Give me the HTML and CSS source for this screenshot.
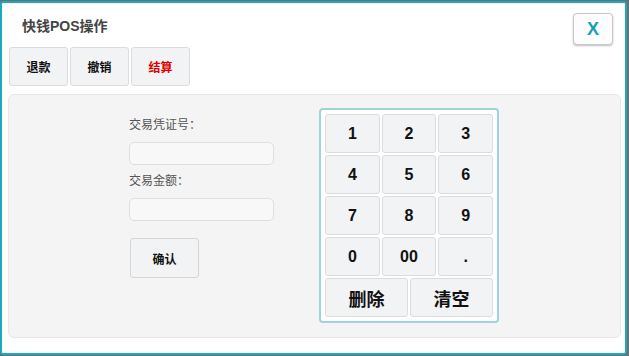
FILE: index.html
```html
<!DOCTYPE html>
<html lang="zh-CN">
<head>
    <meta charset="UTF-8">
    <meta name="viewport" content="width=device-width, initial-scale=1.0">
    <title>快钱POS操作</title>
    <link rel="stylesheet" href="styles.css">
</head>
<body>
    <div class="dialog">
        <!-- 标题栏 -->
        <div class="dialog-header">
            <h2 class="dialog-title">快钱POS操作</h2>
            <button class="close-btn">X</button>
        </div>

        <!-- 操作类型 -->
        <div class="tabs">
            <button class="tab">退款</button>
            <button class="tab">撤销</button>
            <button class="tab active">结算</button>
        </div>

        <div class="panel">
            <div class="form">
                <label class="form-label">交易凭证号：</label>
                <input type="text" class="form-input">
                <label class="form-label second">交易金额：</label>
                <input type="text" class="form-input">
                <button class="confirm-btn">确认</button>
            </div>

            <!-- 数字键盘 -->
            <div class="keypad">
                <button class="key">1</button>
                <button class="key">2</button>
                <button class="key">3</button>
                <button class="key">4</button>
                <button class="key">5</button>
                <button class="key">6</button>
                <button class="key">7</button>
                <button class="key">8</button>
                <button class="key">9</button>
                <button class="key">0</button>
                <button class="key">00</button>
                <button class="key">.</button>
                <button class="key wide">删除</button>
                <button class="key wide">清空</button>
            </div>
        </div>
    </div>
</body>
</html>
```

FILE: styles.css
```css
html, body {
    margin: 0;
    padding: 0;
}

body {
    background-color: #6e6e6e;
    font-family: "Liberation Sans", "Noto Sans CJK SC", sans-serif;
    width: 629px;
    height: 356px;
    overflow: hidden;
}

button {
    font-family: "Liberation Sans", "Noto Sans CJK SC", sans-serif;
    cursor: pointer;
}

.dialog {
    box-sizing: border-box;
    margin-top: 1px;
    width: 627px;
    height: 354px;
    background-color: #fff;
    border: 2px solid #17abc0;
    border-radius: 3px;
}

.dialog-header {
    box-sizing: border-box;
    display: flex;
    align-items: flex-start;
    justify-content: space-between;
    height: 43px;
    padding: 10px 12px 0 20px;
}

.dialog-title {
    margin: 3px 0 0 0;
    font-size: 14px;
    line-height: 20px;
    font-weight: bold;
    color: #444;
}

.close-btn {
    width: 40px;
    height: 32px;
    background-color: #fdfdfd;
    border: 1px solid #c8c8c8;
    border-radius: 4px;
    box-shadow: 0 1px 2px rgba(0, 0, 0, 0.25);
    color: #1a9fb8;
    font-size: 18px;
    font-weight: bold;
    padding: 0;
}

.tabs {
    display: flex;
    gap: 2px;
    padding-left: 7px;
    margin-top: 1px;
}

.tab {
    width: 59px;
    height: 39px;
    background-color: #f2f3f5;
    border: 1px solid #dcdcdc;
    border-radius: 3px;
    font-size: 12px;
    font-weight: bold;
    color: #111;
    padding: 0;
}

.tab.active {
    color: #e00000;
}

.panel {
    box-sizing: border-box;
    display: flex;
    margin: 8px 0 0 6px;
    width: 613px;
    height: 244px;
    padding: 13px 0 0 120px;
    background-color: #f4f4f4;
    border: 1px solid #e6e6e6;
    border-radius: 6px;
}

.form {
    display: flex;
    flex-direction: column;
    width: 145px;
    padding-top: 9px;
    margin-right: 45px;
}

.form-label {
    font-size: 12px;
    line-height: 17px;
    color: #555;
}

.form-label.second {
    margin-top: 8px;
}

.form-input {
    box-sizing: border-box;
    width: 145px;
    height: 23px;
    margin-top: 8px;
    background-color: #f8f8f8;
    border: 1px solid #dedede;
    border-radius: 5px;
}

.confirm-btn {
    width: 69px;
    height: 40px;
    margin: 17px 0 0 1px;
    background-color: #f2f3f5;
    border: 1px solid #d6d6d6;
    border-radius: 3px;
    font-size: 12px;
    font-weight: bold;
    color: #111;
    padding: 0;
}

.keypad {
    box-sizing: border-box;
    display: grid;
    grid-template-columns: repeat(6, 1fr);
    grid-auto-rows: 39px;
    gap: 2px;
    width: 180px;
    height: 215px;
    padding: 4px;
    background-color: #fff;
    border: 2px solid #9fd3de;
    border-radius: 4px;
}

.key {
    grid-column: span 2;
    background-color: #f2f3f5;
    border: 1px solid #dcdcdc;
    border-radius: 3px;
    font-size: 16px;
    font-weight: bold;
    color: #111;
    padding: 0;
}

.key.wide {
    grid-column: span 3;
    font-size: 18px;
}
```
